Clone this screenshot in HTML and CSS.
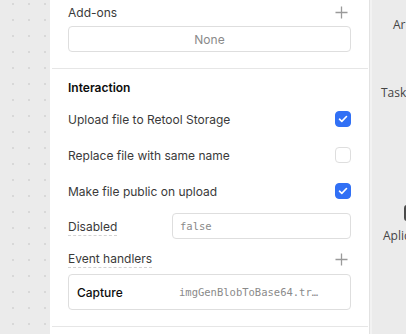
FILE: index.html
```html
<!DOCTYPE html>
<html lang="en">
<head>
  <meta charset="UTF-8">
  <title>Inspector</title>
  <link rel="stylesheet" href="styles.css">
</head>
<body>
  <div class="canvas"></div>

  <div class="panel">
    <section class="section addons">
      <div class="section-head">
        <span class="label">Add-ons</span>
        <button class="add-btn" aria-label="Add">
          <svg width="13" height="13" viewBox="0 0 13 13"><path d="M6.5 0.5v12M0.5 6.5h12" stroke="#9a9a9a" stroke-width="1.3" fill="none"/></svg>
        </button>
      </div>
      <div class="box none-box">None</div>
    </section>

    <section class="section interaction">
      <h2 class="section-title">Interaction</h2>

      <div class="check-row">
        <span class="label">Upload file to Retool Storage</span>
        <span class="check checked">
          <svg width="10" height="8" viewBox="0 0 10 8"><path d="M1.5 4.2l2.3 2.2 4.7-4.9" stroke="#fff" stroke-width="1.6" fill="none" stroke-linecap="round" stroke-linejoin="round"/></svg>
        </span>
      </div>

      <div class="check-row">
        <span class="label">Replace file with same name</span>
        <span class="check"></span>
      </div>

      <div class="check-row">
        <span class="label">Make file public on upload</span>
        <span class="check checked">
          <svg width="10" height="8" viewBox="0 0 10 8"><path d="M1.5 4.2l2.3 2.2 4.7-4.9" stroke="#fff" stroke-width="1.6" fill="none" stroke-linecap="round" stroke-linejoin="round"/></svg>
        </span>
      </div>

      <div class="field-row">
        <div class="field-label"><span class="label dotted">Disabled</span></div>
        <div class="box code-input">false</div>
      </div>

      <div class="section-head events-head">
        <span class="label dotted">Event handlers</span>
        <button class="add-btn" aria-label="Add">
          <svg width="13" height="13" viewBox="0 0 13 13"><path d="M6.5 0.5v12M0.5 6.5h12" stroke="#9a9a9a" stroke-width="1.3" fill="none"/></svg>
        </button>
      </div>

      <div class="box handler">
        <span class="handler-event">Capture</span>
        <span class="handler-action">imgGenBlobToBase64.tr…</span>
      </div>
    </section>
  </div>

  <div class="side">
    <div class="side-item item-ar">Ar</div>
    <div class="side-item item-tasks">Tasks</div>
    <div class="side-icon"></div>
    <div class="side-item item-aplic">Aplic</div>
  </div>
</body>
</html>
```

FILE: styles.css
```css
:root {
  --text: #3a3a3a;
  --text-strong: #0d0d0d;
  --muted: #8a8a8a;
  --border: #dedede;
  --blue: #3170f5;
  --canvas: #ebebeb;
}

* {
  margin: 0;
  padding: 0;
  box-sizing: border-box;
}

body {
  display: flex;
  width: 406px;
  height: 334px;
  overflow: hidden;
  font-family: Inter, "Noto Sans", sans-serif;
  font-size: 12px;
  color: var(--text);
  background: var(--canvas);
}

/* grille de points à gauche */
.canvas {
  width: 50px;
  flex-shrink: 0;
  background-color: var(--canvas);
  background-image: radial-gradient(circle, #d8d8d8 0.8px, transparent 1.2px);
  background-size: 16px 16px;
  background-position: 5px 12px;
}

.panel {
  width: 320px;
  flex-shrink: 0;
  background: #fff;
  border-right: 1px solid #e2e2e2;
}

.section {
  margin: 0 1px 0 2px;
  padding: 0 17px 16px 16px;
  border-bottom: 1px solid #e6e6e6;
}

.section-head {
  display: flex;
  align-items: center;
  justify-content: space-between;
  height: 24px;
}

.add-btn {
  display: flex;
  background: none;
  border: none;
  margin-right: 3px;
}

.box {
  border: 1px solid var(--border);
  border-radius: 4px;
  background: #fff;
}

.none-box {
  height: 26px;
  margin-top: 2px;
  display: flex;
  align-items: center;
  justify-content: center;
  color: var(--muted);
}

.interaction {
  padding-top: 9px;
}

.section-title {
  font-size: 12px;
  font-weight: 600;
  color: var(--text-strong);
  height: 20px;
  line-height: 20px;
  margin-bottom: 7px;
}

.check-row {
  display: flex;
  align-items: center;
  justify-content: space-between;
  height: 28px;
  margin-bottom: 8px;
}

.check {
  width: 16px;
  height: 16px;
  border-radius: 4px;
  border: 1px solid var(--border);
  display: flex;
  align-items: center;
  justify-content: center;
}

.check.checked {
  background: var(--blue);
  border-color: var(--blue);
}

.field-row {
  display: flex;
  align-items: center;
  height: 26px;
}

.field-label {
  width: 104px;
  flex-shrink: 0;
}

.dotted {
  border-bottom: 1px dashed #d2d2d2;
  padding-bottom: 1px;
}

.code-input {
  flex: 1;
  height: 26px;
  display: flex;
  align-items: center;
  padding-left: 7px;
  font-family: "DejaVu Sans Mono", monospace;
  font-size: 10.5px;
  color: var(--muted);
}

.events-head {
  margin-top: 8px;
}

.handler {
  margin-top: 3px;
  height: 36px;
  display: flex;
  align-items: center;
  padding-left: 8px;
}

.handler-event {
  width: 102px;
  font-weight: 500;
  color: var(--text-strong);
}

.handler-action {
  font-family: "DejaVu Sans Mono", monospace;
  font-size: 10.5px;
  color: var(--muted);
}

/* zone de droite, coupée par la fenêtre */
.side {
  flex: 1;
  border-left: 2px solid #f2f2f2;
  background: var(--canvas);
  font-family: "Open Sans", sans-serif;
  font-size: 12px;
  color: #444;
  white-space: nowrap;
  overflow: hidden;
}

.side-item {
  height: 16px;
  line-height: 16px;
}

.item-ar {
  margin-top: 17px;
  padding-left: 21px;
}

.item-tasks {
  margin-top: 52px;
  padding-left: 9px;
}

.side-icon {
  margin-top: 104px;
  margin-left: 32px;
  width: 12px;
  height: 16px;
  border-radius: 3px;
  background: #4a4a4a;
}

.item-aplic {
  margin-top: 7px;
  padding-left: 11px;
}
```
